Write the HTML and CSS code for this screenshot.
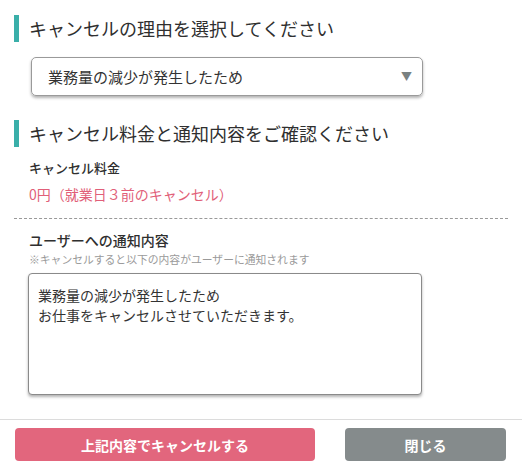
FILE: index.html
```html
<!DOCTYPE html>
<html lang="ja">
<head>
<meta charset="utf-8">
<title>キャンセル</title>
<link rel="stylesheet" href="styles.css">
</head>
<body>
<div class="content">
  <h2 class="title">キャンセルの理由を選択してください</h2>
  <div class="select">
    <span class="select-text">業務量の減少が発生したため</span>
    <span class="select-arrow">▼</span>
  </div>

  <h2 class="title title-second">キャンセル料金と通知内容をご確認ください</h2>
  <div class="label fee-label">キャンセル料金</div>
  <div class="fee-value">0円（就業日３前のキャンセル）</div>
  <div class="dash"></div>
  <div class="label notice-label">ユーザーへの通知内容</div>
  <div class="note">※キャンセルすると以下の内容がユーザーに通知されます</div>
  <textarea class="message" readonly>業務量の減少が発生したため
お仕事をキャンセルさせていただきます。</textarea>
</div>
<div class="footer">
  <button class="btn btn-cancel">上記内容でキャンセルする</button>
  <button class="btn btn-close">閉じる</button>
</div>
</body>
</html>
```

FILE: styles.css
```css
html, body {
  margin: 0;
  padding: 0;
  background: #fff;
}
body {
  width: 522px;
  font-family: "Noto Sans CJK JP", "Noto Sans", sans-serif;
  color: #333;
}
.content {
  padding: 15px 14px 0 14px;
}
.title {
  margin: 0;
  border-left: 5px solid #3aafa9;
  padding-left: 10px;
  font-size: 18px;
  line-height: 27px;
  font-weight: 400;
  color: #2f2f2f;
}
.title-second {
  margin-top: 24px;
}
.select {
  margin: 15px 0 0 17px;
  width: 392px;
  height: 39px;
  box-sizing: border-box;
  border: 1px solid #9a9a9a;
  border-radius: 5px;
  box-shadow: 0 2px 3px rgba(0, 0, 0, 0.3);
  display: flex;
  align-items: center;
  justify-content: space-between;
  padding: 0 10px 0 16px;
}
.select-text {
  font-size: 15px;
  color: #333;
}
.select-arrow {
  font-size: 11px;
  color: #7a8181;
  line-height: 1;
}
.label {
  margin-left: 15px;
  font-weight: 500;
  color: #2f2f2f;
}
.fee-label {
  margin-top: 11px;
  font-size: 13px;
  line-height: 20px;
}
.fee-value {
  margin: 6px 0 0 15px;
  font-size: 14px;
  line-height: 20px;
  color: #e15f79;
}
.dash {
  margin-top: 14px;
  border-top: 1px dashed #999;
}
.notice-label {
  margin-top: 11px;
  font-size: 14px;
  line-height: 20px;
}
.note {
  margin: 2px 0 0 15px;
  font-size: 10.8px;
  line-height: 14px;
  color: #9a9a9a;
}
.message {
  display: block;
  margin: 7px 0 0 14px;
  width: 394px;
  height: 122px;
  box-sizing: border-box;
  border: 1px solid #8a8a8a;
  border-radius: 4px;
  box-shadow: 0 2px 3px rgba(0, 0, 0, 0.3);
  padding: 11px 9px;
  font-family: "Noto Sans CJK JP", "Noto Sans", sans-serif;
  font-size: 14px;
  line-height: 20px;
  color: #333;
  resize: none;
  outline: none;
  overflow: hidden;
}
.footer {
  margin-top: 24px;
  border-top: 1px solid #dcdcdc;
  padding: 8px 16px 0 15px;
  display: flex;
  justify-content: space-between;
}
.btn {
  height: 33px;
  border: none;
  border-radius: 4px;
  color: #fff;
  font-family: "Noto Sans CJK JP", "Noto Sans", sans-serif;
  font-size: 14px;
  font-weight: 700;
  padding: 0;
}
.btn-cancel {
  width: 300px;
  background: #e2667d;
}
.btn-close {
  width: 161px;
  background: #858b8c;
}
```
